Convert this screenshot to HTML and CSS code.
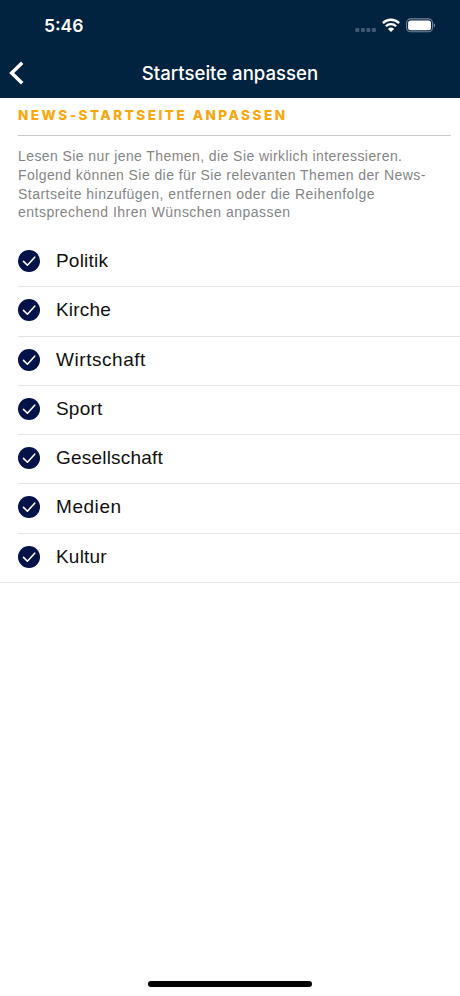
FILE: index.html
```html
<!DOCTYPE html>
<html lang="de">
<head>
<meta charset="utf-8">
<title>Startseite anpassen</title>
<link rel="stylesheet" href="styles.css">
</head>
<body>
<svg class="defs" width="0" height="0" aria-hidden="true">
  <symbol id="check" viewBox="0 0 22 22">
    <circle cx="11" cy="11" r="11" fill="#04124a"/>
    <path d="M5.5 11.4 9.4 15.2 16.7 7.2" fill="none" stroke="#fff" stroke-width="1.6" stroke-linecap="round" stroke-linejoin="round"/>
  </symbol>
</svg>
<header class="header">
  <div class="status">
    <span class="time">5:46</span>
    <div class="indicators">
      <svg width="22" height="20" viewBox="0 0 22 20"><g fill="#405a74"><rect x="0.3" y="13" width="4" height="4" rx="1"/><rect x="5.9" y="13" width="4" height="4" rx="1"/><rect x="11.4" y="13" width="4" height="4" rx="1"/><rect x="16.9" y="13" width="4" height="4" rx="1"/></g></svg>
      <svg class="wifi" width="18" height="20" viewBox="0 0 18 20"><g fill="none" stroke="#fff" stroke-width="2.3"><path d="M.9 8.1a11.5 11.5 0 0 1 16.2 0"/><path d="M3.9 11.2a7.2 7.2 0 0 1 10.2 0"/></g><path d="M9 17.1 5.9 13.9a4.4 4.4 0 0 1 6.2 0Z" fill="#fff"/></svg>
      <svg class="battery" width="30" height="20" viewBox="0 0 30 20"><rect x=".6" y="3.9" width="25.9" height="12.9" rx="4" fill="none" stroke="#71859a" stroke-width="1.1"/><rect x="2.1" y="5.4" width="22.9" height="9.9" rx="2.5" fill="#fff"/><path d="M27.7 8.3c2 .8 2 3.3 0 4.1Z" fill="#71859a"/></svg>
    </div>
  </div>
  <nav class="nav">
    <svg class="back" width="16" height="24" viewBox="0 0 16 24"><path d="M14.2 1.7 3.7 12 14.2 22.3" fill="none" stroke="#fff" stroke-width="3.5"/></svg>
    <h1 class="title">Startseite anpassen</h1>
  </nav>
</header>
<main>
  <section class="intro">
    <h2 class="heading">NEWS-STARTSEITE ANPASSEN</h2>
    <p class="text">Lesen Sie nur jene Themen, die Sie wirklich interessieren.<br>Folgend können Sie die für Sie relevanten Themen der News-<br><span class="loose">Startseite hinzufügen, entfernen oder die Reihenfolge<br>entsprechend Ihren Wünschen anpassen</span></p>
  </section>
  <ul class="topics">
    <li class="topic"><svg class="check"><use href="#check"/></svg><span class="label">Politik</span></li>
    <li class="topic"><svg class="check"><use href="#check"/></svg><span class="label">Kirche</span></li>
    <li class="topic"><svg class="check"><use href="#check"/></svg><span class="label wide">Wirtschaft</span></li>
    <li class="topic"><svg class="check"><use href="#check"/></svg><span class="label">Sport</span></li>
    <li class="topic"><svg class="check"><use href="#check"/></svg><span class="label">Gesellschaft</span></li>
    <li class="topic"><svg class="check"><use href="#check"/></svg><span class="label wide">Medien</span></li>
    <li class="topic"><svg class="check"><use href="#check"/></svg><span class="label">Kultur</span></li>
  </ul>
</main>
<div class="home"></div>
</body>
</html>
```
FILE: styles.css
```css
* { box-sizing: border-box; }
body {
  margin: 0;
  height: 996px;
  display: flex;
  flex-direction: column;
  background: #fff;
  font-family: "Liberation Sans", Arial, sans-serif;
  overflow: hidden;
}
.defs { position: absolute; }
svg { display: block; flex: none; }
.header { height: 98px; background: #022340; color: #fff; flex: none; }
.status {
  height: 50px;
  padding: 0 24px 0 44px;
  display: flex;
  justify-content: space-between;
  align-items: center;
}
.time { font: 600 17.5px/20px Inter, sans-serif; padding-top: 1px; }
.indicators { display: flex; }
.wifi { margin-left: 5px; }
.battery { margin-left: 6px; }
.nav {
  height: 48px;
  display: grid;
  grid-template-columns: 36px 1fr 36px;
  align-items: center;
}
.back { margin-left: 8px; margin-top: -3px; }
.title {
  margin: 0;
  padding-bottom: 2px;
  text-align: center;
  font: 500 18.6px/24px Inter, sans-serif;
}
.intro { padding: 8px 9px 0 18px; }
.heading {
  margin: 0;
  height: 30px;
  border-bottom: 1px solid #c8c8c8;
  color: #faa70c;
  font-family: Inter, sans-serif;
  font-size: 13.5px;
  line-height: 18px;
  font-weight: 800;
  letter-spacing: 2.5px;
  white-space: nowrap;
}
.text {
  margin: 11px 0 0;
  color: #858585;
  font-size: 14px;
  line-height: 18.8px;
  letter-spacing: .42px;
  white-space: nowrap;
}
.loose { letter-spacing: .48px; }
.topics {
  list-style: none;
  margin: 0;
  padding: 16px 0 0;
}
.topic {
  height: 49.25px;
  margin-left: 18px;
  padding-bottom: 2.5px;
  display: flex;
  align-items: center;
  gap: 16px;
  border-bottom: 1px solid #e4e4e6;
}
.topic:last-child { margin-left: 0; padding-left: 18px; }
.check { width: 22px; height: 22px; }
.label {
  color: #111;
  font-size: 19px;
  line-height: 24px;
  letter-spacing: .2px;
}
.wide { letter-spacing: .55px; }
.home {
  width: 164px;
  height: 6px;
  margin: auto auto 9px;
  border-radius: 3px;
  background: #000;
}
```
